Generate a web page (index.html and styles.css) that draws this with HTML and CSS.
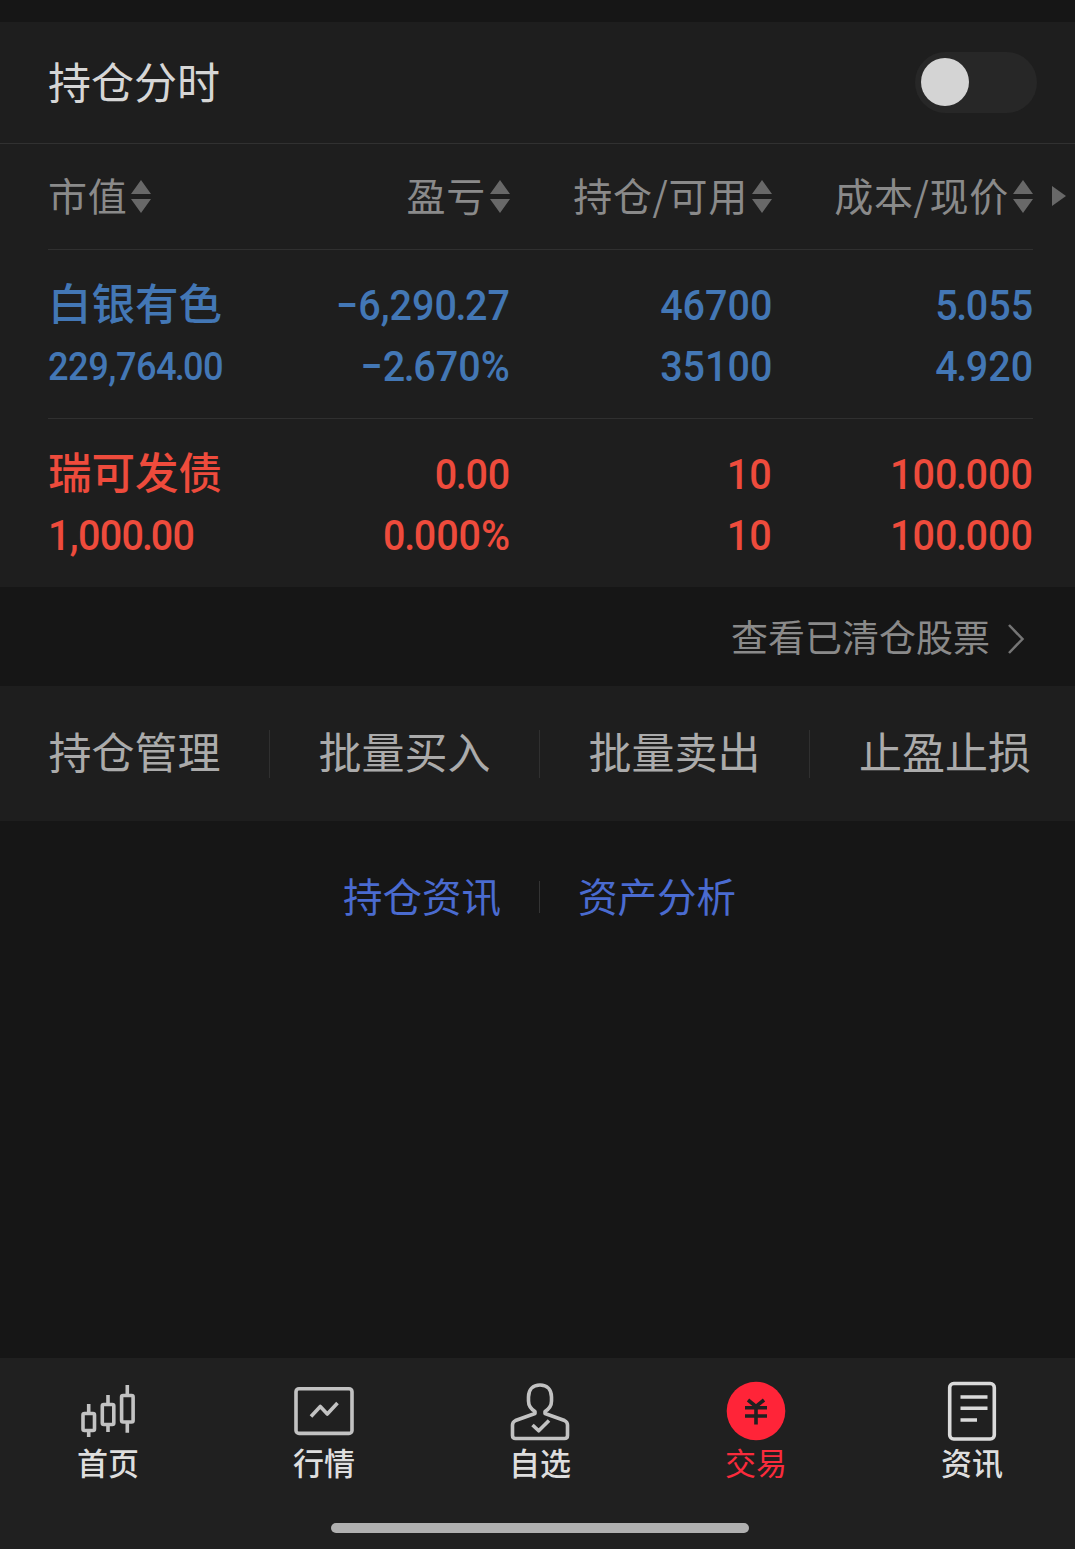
FILE: index.html
```html
<!DOCTYPE html>
<html lang="zh-CN">
<head>
    <meta charset="UTF-8">
    <meta name="viewport" content="width=device-width, initial-scale=1.0">
    <title>持仓</title>
    <link rel="stylesheet" href="styles.css">
</head>
<body>
    <div class="page">
        <div class="switch-row">
            <span>持仓分时</span>
            <div class="switch"><div class="knob"></div></div>
        </div>

        <div class="holdings">
            <div class="row head">
                <div class="cell"><span>市值</span><svg class="sort" viewBox="0 0 20 34"><path d="M10 0L20 14H0zM0 19H20L10 33z"/></svg></div>
                <div class="cell"><span>盈亏</span><svg class="sort" viewBox="0 0 20 34"><path d="M10 0L20 14H0zM0 19H20L10 33z"/></svg></div>
                <div class="cell"><span>持仓/可用</span><svg class="sort" viewBox="0 0 20 34"><path d="M10 0L20 14H0zM0 19H20L10 33z"/></svg></div>
                <div class="cell"><span>成本/现价</span><svg class="sort" viewBox="0 0 20 34"><path d="M10 0L20 14H0zM0 19H20L10 33z"/></svg></div>
                <svg class="more" viewBox="0 0 14 20"><path d="M0 0L14 10L0 20z"/></svg>
            </div>

            <div class="row stock down">
                <div class="cell"><span class="name">白银有色</span><span class="num small">229,764<i>.</i>00</span></div>
                <div class="cell"><span class="num">−6,290<i>.</i>27</span><span class="num">−2<i>.</i>670%</span></div>
                <div class="cell"><span class="num">46700</span><span class="num">35100</span></div>
                <div class="cell"><span class="num">5<i>.</i>055</span><span class="num">4<i>.</i>920</span></div>
            </div>

            <div class="row stock up">
                <div class="cell"><span class="name">瑞可发债</span><span class="num tight">1,000<i>.</i>00</span></div>
                <div class="cell"><span class="num">0<i>.</i>00</span><span class="num">0<i>.</i>000%</span></div>
                <div class="cell"><span class="num">10</span><span class="num">10</span></div>
                <div class="cell"><span class="num">100<i>.</i>000</span><span class="num">100<i>.</i>000</span></div>
            </div>
        </div>

        <div class="cleared">
            <span>查看已清仓股票</span>
            <svg viewBox="0 0 18 32"><path d="M2 2L15.500 16L2 30"/></svg>
        </div>

        <div class="actions">
            <div class="action"><span>持仓管理</span></div>
            <div class="action"><span>批量买入</span></div>
            <div class="action"><span>批量卖出</span></div>
            <div class="action"><span>止盈止损</span></div>
        </div>

        <div class="links">
            <a>持仓资讯</a>
            <div class="line"></div>
            <a>资产分析</a>
        </div>

        <div class="tabbar">
            <div class="tabs">
                <div class="tab">
                    <svg viewBox="0 0 60 60">
                        <rect x="5" y="32.500" width="11.500" height="17" rx="1.500"/>
                        <rect x="24.300" y="23.500" width="11.500" height="20" rx="1.500"/>
                        <rect x="43.600" y="14.500" width="11.500" height="26.500" rx="1.500"/>
                        <path d="M10.700 23v9.500M10.700 49.500V56M30 14v9.500M30 43.500V51M49.300 4v10.500M49.300 41v10.700"/>
                    </svg>
                    <span>首页</span>
                </div>
                <div class="tab">
                    <svg viewBox="0 0 60 60">
                        <rect x="2" y="7.700" width="56" height="44.700" rx="3"/>
                        <path d="M17 35.500L26.300 25.500L33.300 33L43.500 22"/>
                    </svg>
                    <span>行情</span>
                </div>
                <div class="tab">
                    <svg viewBox="0 0 60 60">
                        <path d="M25 32.500V30.500C21 28 18.500 24.500 18.500 20V16C18.500 8.500 23 4 30 4S41.500 8.500 41.500 16V20C41.500 24.500 39 28 35 30.500V32.500L54.500 39.500Q57.500 41 57.500 44V54.500Q57.500 57.500 54.500 57.500H5.500Q2.500 57.500 2.500 54.500V44Q2.500 41 5.500 39.500z"/>
                        <path d="M22.500 44L28.700 49.800L39 39.500"/>
                    </svg>
                    <span>自选</span>
                </div>
                <div class="tab active">
                    <svg viewBox="0 0 60 60">
                        <circle cx="30" cy="30" r="29.300"/>
                        <path d="M22 19L30 25.500L38 19M19 26.800H41M19 35H41M30 25V43.500"/>
                    </svg>
                    <span>交易</span>
                </div>
                <div class="tab news">
                    <svg viewBox="0 0 60 60">
                        <rect x="7.700" y="2.500" width="44.600" height="55.500" rx="4"/>
                        <path d="M18.500 16H45.500M18.500 27.300H45.500M18.500 39H35"/>
                    </svg>
                    <span>资讯</span>
                </div>
            </div>
            <div class="home-bar"></div>
        </div>
    </div>
</body>
</html>
```
FILE: styles.css
```css
* {
    box-sizing: border-box;
}

body {
    margin: 0;
    background: #161616;
    font-family: "Noto Sans CJK SC", sans-serif;
    color: #d6d6d6;
}

.page {
    width: 1075px;
    height: 1549px;
    padding-top: 22px;
    overflow: hidden;
    display: flex;
    flex-direction: column;
}

.switch-row {
    height: 122px;
    padding: 0 38px 0 48px;
    background: #1e1e1e;
    border-bottom: 1px solid #313131;
    display: flex;
    justify-content: space-between;
    align-items: center;
    font-size: 43px;
    line-height: 60px;
}

.switch-row span {
    padding-bottom: 6px;
}

.switch {
    width: 122px;
    height: 61px;
    padding: 6px;
    border-radius: 31px;
    background: #272727;
}

.knob {
    width: 48px;
    height: 48px;
    border-radius: 50%;
    background: #d4d4d4;
}

/* holdings table */
.holdings {
    height: 443px;
    padding: 0 42px 0 48px;
    background: #1e1e1e;
}

.row {
    display: grid;
    grid-template-columns: 200px 262px 262px 261px;
    position: relative;
    border-bottom: 1px solid #303030;
}

.row:last-child {
    border-bottom: none;
}

.head {
    height: 106px;
    align-items: center;
    font-size: 39px;
    line-height: 56px;
    letter-spacing: 0.7px;
    color: #8a8a8a;
}

.head .cell {
    display: flex;
    align-items: center;
    justify-content: flex-end;
    gap: 4px;
}

.head .cell:first-child {
    justify-content: flex-start;
}

.head span {
    padding-bottom: 5px;
}

.sort {
    width: 20px;
    height: 34px;
    fill: #686868;
}

.more {
    position: absolute;
    right: -33px;
    top: 42px;
    width: 14px;
    height: 20px;
    fill: #686868;
}

.stock {
    height: 169px;
    padding-top: 25px;
}

.stock .cell {
    display: flex;
    flex-direction: column;
    align-items: flex-end;
}

.stock .cell:first-child {
    align-items: flex-start;
}

.name {
    font-size: 43.5px;
    font-weight: 500;
    line-height: 61px;
    margin-top: -4px;
    margin-bottom: 4px;
}

.num {
    font-family: Roboto, sans-serif;
    font-size: 42px;
    font-weight: 500;
    line-height: 61px;
    white-space: nowrap;
    transform: scaleX(0.94);
    transform-origin: right;
}

.num i {
    font-style: normal;
    margin: 0 -1.5px;
}

.cell:first-child .num {
    transform-origin: left;
}

.small {
    font-size: 38.5px;
    letter-spacing: -0.5px;
}

.tight {
    letter-spacing: -0.7px;
}

.down {
    color: #4377b5;
}

.up {
    color: #ee4b3c;
}

.cleared {
    height: 99px;
    padding-right: 50px;
    display: flex;
    justify-content: flex-end;
    align-items: center;
    gap: 17px;
    font-size: 37px;
    line-height: 54px;
    color: #8a8a8a;
}

.cleared span {
    padding-bottom: 2px;
}

.cleared svg {
    width: 18px;
    height: 32px;
    margin-top: 4px;
    fill: none;
    stroke: #757575;
    stroke-width: 2.5;
}

.actions {
    height: 135px;
    background: #1e1e1e;
    display: grid;
    grid-template-columns: repeat(4, 270px);
    align-items: center;
}

.action {
    height: 48px;
    border-right: 1px solid #303030;
    text-align: center;
    font-size: 43px;
    line-height: 41px;
    color: #ababab;
}

.action:last-child {
    border-right: none;
}

.links {
    padding-top: 44px;
    padding-left: 4px;
    display: flex;
    justify-content: center;
    align-items: center;
    gap: 38px;
    font-size: 39.5px;
    line-height: 60px;
    color: #4a6bd0;
}

.links a {
    padding-bottom: 3px;
}

.line {
    width: 1px;
    height: 32px;
    background: #343434;
}

/* bottom tabs */
.tabbar {
    height: 191px;
    margin-top: auto;
    padding-top: 23px;
    background: #202020;
}

.tabs {
    display: grid;
    grid-template-columns: repeat(5, 216px);
    height: 142px;
}

.tab {
    display: flex;
    flex-direction: column;
    align-items: center;
    font-size: 31px;
    font-weight: 500;
    line-height: 41px;
    color: #dedede;
}

.tab svg {
    width: 60px;
    height: 60px;
    fill: none;
    stroke: #c2c2c2;
    stroke-width: 3.6;
    stroke-linejoin: round;
}

.tab.news svg {
    stroke: #dadada;
}

.tab.active {
    color: #fb2b3c;
    font-weight: 400;
}

.tab.active svg {
    stroke: #202020;
}

.tab.active circle {
    fill: #ff2438;
    stroke: none;
}

.home-bar {
    width: 418px;
    height: 10px;
    margin-left: 331px;
    border-radius: 5px;
    background: #b0b0b0;
}
```
